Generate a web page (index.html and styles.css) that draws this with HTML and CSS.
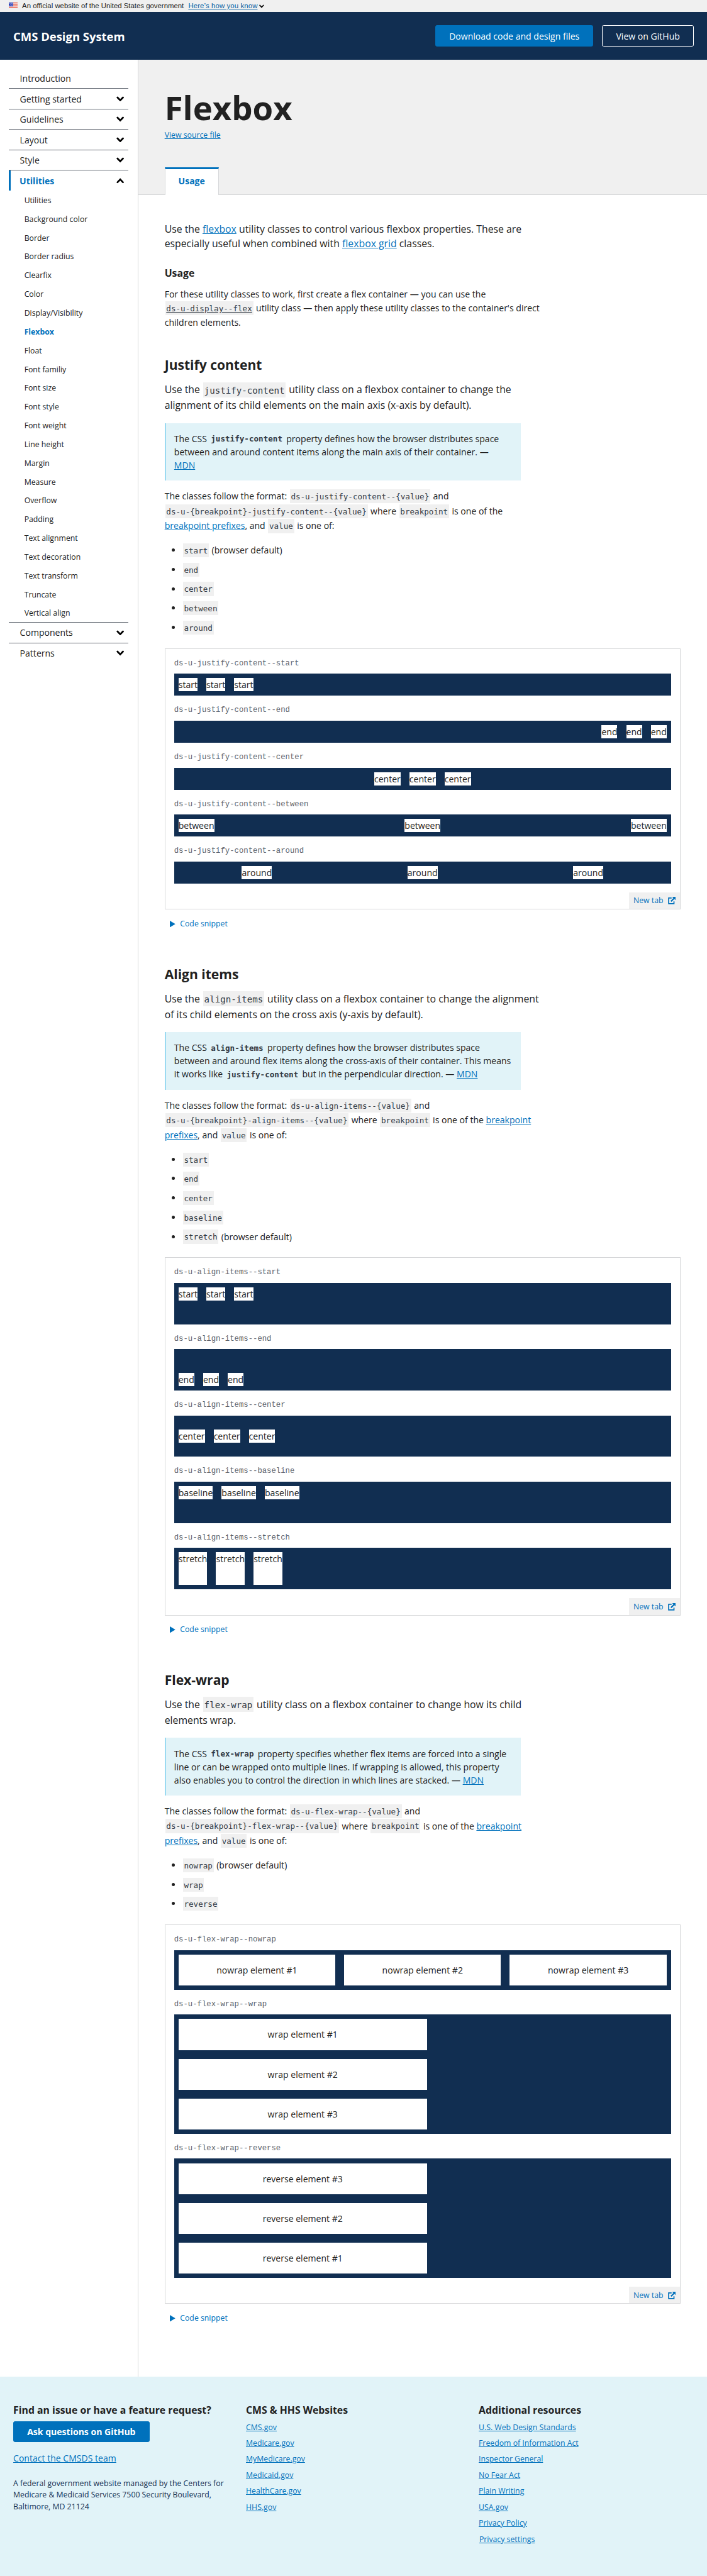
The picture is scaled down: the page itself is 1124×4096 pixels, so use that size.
FILE: index.html
```html
<!DOCTYPE html>
<html lang="en">
<head>
<meta charset="utf-8">
<title>Flexbox - CMS Design System</title>
<link rel="stylesheet" href="styles.css">
</head>
<body>
<svg class="sprite" width="0" height="0" aria-hidden="true">
  <symbol id="chevron" viewBox="0 0 14 10"><path d="M2 2.2 7 7.4 12 2.2" fill="none" stroke="#000" stroke-width="3.1" stroke-linecap="round" stroke-linejoin="miter"/></symbol>
  <symbol id="external" viewBox="0 0 15 15"><path d="M7 2.4H1.3V13.4H11.6V9" fill="none" stroke="#0071bc" stroke-width="2.1"/><path d="M8 0h6.6v6.4l-2.2-2.1-5.6 5.6-2-2 5.6-5.6z" fill="#0071bc"/></symbol>
</svg>

<div class="banner">
  <svg class="flag" viewBox="0 0 16 11">
    <rect width="16" height="11" fill="#fff"/>
    <path d="M0 .5h16M0 2.5h16M0 4.5h16M0 6.5h16M0 8.5h16M0 10.5h16" stroke="#e0341c" stroke-width="1"/>
    <rect width="8" height="7" fill="#1e33b1"/>
    <path d="M1 1.5h7M2 3.5h6M1 5.5h7" stroke="#fff" stroke-width="1" stroke-dasharray="1 1"/>
  </svg>
  <span class="banner-text">An official website of the United States government</span>
  <a class="banner-link" href="#">Here’s how you know</a>
  <svg class="banner-chevron"><use href="#chevron"/></svg>
</div>

<header class="header">
  <a class="brand" href="#">CMS Design System</a>
  <div class="header-actions">
    <a class="button button-primary" href="#">Download code and design files</a>
    <a class="button button-outline" href="#">View on GitHub</a>
  </div>
</header>

<div class="layout">
  <nav class="sidebar">
    <a class="nav-item" href="#">Introduction</a>
    <a class="nav-item" href="#">Getting started<svg class="chevron"><use href="#chevron"/></svg></a>
    <a class="nav-item" href="#">Guidelines<svg class="chevron"><use href="#chevron"/></svg></a>
    <a class="nav-item" href="#">Layout<svg class="chevron"><use href="#chevron"/></svg></a>
    <a class="nav-item" href="#">Style<svg class="chevron"><use href="#chevron"/></svg></a>
    <a class="nav-item nav-open" href="#">Utilities<svg class="chevron"><use href="#chevron"/></svg></a>
    <div class="subnav">
      <a href="#">Utilities</a>
      <a href="#">Background color</a>
      <a href="#">Border</a>
      <a href="#">Border radius</a>
      <a href="#">Clearfix</a>
      <a href="#">Color</a>
      <a href="#">Display/Visibility</a>
      <a class="current" href="#">Flexbox</a>
      <a href="#">Float</a>
      <a href="#">Font familiy</a>
      <a href="#">Font size</a>
      <a href="#">Font style</a>
      <a href="#">Font weight</a>
      <a href="#">Line height</a>
      <a href="#">Margin</a>
      <a href="#">Measure</a>
      <a href="#">Overflow</a>
      <a href="#">Padding</a>
      <a href="#">Text alignment</a>
      <a href="#">Text decoration</a>
      <a href="#">Text transform</a>
      <a href="#">Truncate</a>
      <a href="#">Vertical align</a>
    </div>
    <a class="nav-item nav-first-after" href="#">Components<svg class="chevron"><use href="#chevron"/></svg></a>
    <a class="nav-item nav-last" href="#">Patterns<svg class="chevron"><use href="#chevron"/></svg></a>
  </nav>

  <main class="main">
    <div class="page-header">
      <h1>Flexbox</h1>
      <a class="source" href="#">View source file</a>
      <div class="tab">Usage</div>
    </div>

    <div class="content">
      <p class="intro">Use the <a href="#">flexbox</a> utility classes to control various flexbox properties. These are<br>especially useful when combined with <a href="#">flexbox grid</a> classes.</p>
      <h3>Usage</h3>
      <p class="usage">For these utility classes to work, first create a flex container — you can use the<br><a class="code-link" href="#"><code>ds-u-display--flex</code></a> utility class — then apply these utility classes to the container's direct<br>children elements.</p>

      <section>
        <h2>Justify content</h2>
        <p class="lead">Use the <code>justify-content</code> utility class on a flexbox container to change the<br>alignment of its child elements on the main axis (x-axis by default).</p>
        <div class="callout">The CSS <code>justify-content</code> property defines how the browser distributes space<br>between and around content items along the main axis of their container. —<br><a href="#">MDN</a></div>
        <p class="format">The classes follow the format: <code>ds-u-justify-content--{value}</code> and<br><code>ds-u-{breakpoint}-justify-content--{value}</code> where <code>breakpoint</code> is one of the<br><a href="#">breakpoint prefixes</a>, and <code>value</code> is one of:</p>
        <ul>
          <li><code>start</code> (browser default)</li>
          <li><code>end</code></li>
          <li><code>center</code></li>
          <li><code>between</code></li>
          <li><code>around</code></li>
        </ul>
        <div class="example">
          <div class="label">ds-u-justify-content--start</div>
          <div class="bar justify-start"><div>start</div><div>start</div><div>start</div></div>
          <div class="label">ds-u-justify-content--end</div>
          <div class="bar justify-end"><div>end</div><div>end</div><div>end</div></div>
          <div class="label">ds-u-justify-content--center</div>
          <div class="bar justify-center"><div>center</div><div>center</div><div>center</div></div>
          <div class="label">ds-u-justify-content--between</div>
          <div class="bar justify-between"><div>between</div><div>between</div><div>between</div></div>
          <div class="label">ds-u-justify-content--around</div>
          <div class="bar justify-around"><div>around</div><div>around</div><div>around</div></div>
          <a class="new-tab" href="#">New tab<svg class="external"><use href="#external"/></svg></a>
        </div>
        <a class="snippet" href="#"><svg class="triangle" viewBox="0 0 10 12"><path d="M0 0 10 6 0 12z" fill="#0071bc"/></svg>Code snippet</a>
      </section>

      <section>
        <h2>Align items</h2>
        <p class="lead">Use the <code>align-items</code> utility class on a flexbox container to change the alignment<br>of its child elements on the cross axis (y-axis by default).</p>
        <div class="callout">The CSS <code>align-items</code> property defines how the browser distributes space<br>between and around flex items along the cross-axis of their container. This means<br>it works like <code>justify-content</code> but in the perpendicular direction. — <a href="#">MDN</a></div>
        <p class="format">The classes follow the format: <code>ds-u-align-items--{value}</code> and<br><code>ds-u-{breakpoint}-align-items--{value}</code> where <code>breakpoint</code> is one of the <a href="#">breakpoint<br>prefixes</a>, and <code>value</code> is one of:</p>
        <ul>
          <li><code>start</code></li>
          <li><code>end</code></li>
          <li><code>center</code></li>
          <li><code>baseline</code></li>
          <li><code>stretch</code> (browser default)</li>
        </ul>
        <div class="example">
          <div class="label">ds-u-align-items--start</div>
          <div class="bar tall items-start"><div>start</div><div>start</div><div>start</div></div>
          <div class="label">ds-u-align-items--end</div>
          <div class="bar tall items-end"><div>end</div><div>end</div><div>end</div></div>
          <div class="label">ds-u-align-items--center</div>
          <div class="bar tall items-center"><div>center</div><div>center</div><div>center</div></div>
          <div class="label">ds-u-align-items--baseline</div>
          <div class="bar tall items-baseline"><div>baseline</div><div>baseline</div><div>baseline</div></div>
          <div class="label">ds-u-align-items--stretch</div>
          <div class="bar tall"><div>stretch</div><div>stretch</div><div>stretch</div></div>
          <a class="new-tab" href="#">New tab<svg class="external"><use href="#external"/></svg></a>
        </div>
        <a class="snippet" href="#"><svg class="triangle" viewBox="0 0 10 12"><path d="M0 0 10 6 0 12z" fill="#0071bc"/></svg>Code snippet</a>
      </section>

      <section>
        <h2>Flex-wrap</h2>
        <p class="lead">Use the <code>flex-wrap</code> utility class on a flexbox container to change how its child<br>elements wrap.</p>
        <div class="callout">The CSS <code>flex-wrap</code> property specifies whether flex items are forced into a single<br>line or can be wrapped onto multiple lines. If wrapping is allowed, this property<br>also enables you to control the direction in which lines are stacked. — <a href="#">MDN</a></div>
        <p class="format">The classes follow the format: <code>ds-u-flex-wrap--{value}</code> and<br><code>ds-u-{breakpoint}-flex-wrap--{value}</code> where <code>breakpoint</code> is one of the <a href="#">breakpoint<br>prefixes</a>, and <code>value</code> is one of:</p>
        <ul>
          <li><code>nowrap</code> (browser default)</li>
          <li><code>wrap</code></li>
          <li><code>reverse</code></li>
        </ul>
        <div class="example">
          <div class="label">ds-u-flex-wrap--nowrap</div>
          <div class="bar boxes"><div>nowrap element #1</div><div>nowrap element #2</div><div>nowrap element #3</div></div>
          <div class="label">ds-u-flex-wrap--wrap</div>
          <div class="bar boxes wrap"><div>wrap element #1</div><div>wrap element #2</div><div>wrap element #3</div></div>
          <div class="label">ds-u-flex-wrap--reverse</div>
          <div class="bar boxes wrap wrap-reverse"><div>reverse element #1</div><div>reverse element #2</div><div>reverse element #3</div></div>
          <a class="new-tab" href="#">New tab<svg class="external"><use href="#external"/></svg></a>
        </div>
        <a class="snippet" href="#"><svg class="triangle" viewBox="0 0 10 12"><path d="M0 0 10 6 0 12z" fill="#0071bc"/></svg>Code snippet</a>
      </section>
    </div>
  </main>
</div>

<footer class="footer">
  <div class="footer-col">
    <h4>Find an issue or have a feature request?</h4>
    <a class="button button-primary button-bold" href="#">Ask questions on GitHub</a>
    <a class="contact" href="#">Contact the CMSDS team</a>
    <p class="address">A federal government website managed by the Centers for<br>Medicare &amp; Medicaid Services 7500 Security Boulevard,<br>Baltimore, MD 21124</p>
  </div>
  <div class="footer-col">
    <h4>CMS &amp; HHS Websites</h4>
    <div class="links">
      <a href="#">CMS.gov</a>
      <a href="#">Medicare.gov</a>
      <a href="#">MyMedicare.gov</a>
      <a href="#">Medicaid.gov</a>
      <a href="#">HealthCare.gov</a>
      <a href="#">HHS.gov</a>
    </div>
  </div>
  <div class="footer-col">
    <h4>Additional resources</h4>
    <div class="links">
      <a href="#">U.S. Web Design Standards</a>
      <a href="#">Freedom of Information Act</a>
      <a href="#">Inspector General</a>
      <a href="#">No Fear Act</a>
      <a href="#">Plain Writing</a>
      <a href="#">USA.gov</a>
      <a href="#">Privacy Policy</a>
      <a class="settings" href="#">Privacy settings</a>
    </div>
  </div>
</footer>
</body>
</html>
```
FILE: styles.css
```css
* { box-sizing: border-box; }

/* All sizes are in rem; the root size sets the scale of the page. */
html { background: #fff; font-size: 8.78125px; }

body {
  margin: 0;
  color: #212121;
  font: 1.6rem/2.4rem "Open Sans", sans-serif;
}

a { color: #0071bc; }
h1, h2, h3, h4, p, ul { margin: 0; padding: 0; }
.sprite { display: block; }

/* Government banner */
.banner {
  display: flex;
  height: 2.2rem;
  padding-left: 1.6rem;
  background: #f0f0f0;
  font: 1.296rem/2.1rem "Liberation Sans", Arial, sans-serif;
  white-space: nowrap;
}
.flag { width: 1.6rem; height: 1.1rem; margin: 0.4rem 0.8rem 0 0; }
.banner-text { width: 30.1rem; }
.banner-link { width: 12.6rem; color: #005ea2; letter-spacing: 0.013rem; }
.banner-chevron { width: 0.9rem; height: 0.7rem; margin: 0.8rem 0 0 0.2rem; }

/* Site header */
.header {
  display: flex;
  align-items: center;
  justify-content: space-between;
  height: 8.6rem;
  padding: 0 2.4rem;
  background: #112e51;
}
.brand { color: #fff; font-size: 2.1rem; font-weight: 700; text-decoration: none; }
.header-actions { display: flex; gap: 1.6rem; }
.button {
  display: flex;
  align-items: center;
  justify-content: center;
  height: 3.8rem;
  padding: 0 2.4rem;
  border: 1px solid #0071bc;
  border-radius: 0.3rem;
  color: #fff;
  text-decoration: none;
  white-space: nowrap;
}
.button-primary { background: #0071bc; }
.button-outline { border-color: #fff; }
.button-bold { font-weight: 700; }

/* Columns */
.layout { display: flex; height: 419.6rem; }
.sidebar {
  width: 25rem;
  flex: none;
  padding: 1.6rem 1.6rem 0;
  border-right: 1px solid #d6d7d9;
}
.nav-item {
  display: flex;
  align-items: center;
  justify-content: space-between;
  height: 3.7rem;
  padding: 0 0.8rem 0 2rem;
  border-bottom: 1px solid #5b616b;
  color: #212121;
  text-decoration: none;
}
.chevron { width: 1.4rem; height: 1rem; }
.nav-open {
  height: 3.6rem;
  padding-left: 1.6rem;
  border-bottom: 0;
  border-left: 0.4rem solid #0071bc;
  color: #0071bc;
  font-weight: 700;
}
.nav-open .chevron { transform: scaleY(-1); }
.nav-first-after { height: 3.8rem; border-top: 1px solid #5b616b; }
.nav-last { height: 3.6rem; border-bottom: 0; }
.subnav { display: flex; flex-direction: column; }
.subnav a {
  height: 3.4rem;
  padding-left: 2.8rem;
  color: #212121;
  font-size: 1.4rem;
  line-height: 3.55rem;
  text-decoration: none;
}
.subnav .current { color: #0071bc; font-weight: 700; }

.main { flex: 1; min-width: 0; white-space: nowrap; }

/* Page header */
.page-header {
  display: flex;
  flex-direction: column;
  align-items: flex-start;
  height: 24.5rem;
  padding: 4.8rem 4.8rem 0;
  border-bottom: 1px solid #d6d7d9;
  background: #f0f0f0;
}
h1 { font-size: 6rem; line-height: 7.8rem; }
.source { font-size: 1.4rem; line-height: 2.2rem; }
.tab {
  flex: none;
  width: 9.8rem;
  height: 5rem;
  margin-top: 4.7rem;
  border: 1px solid #d6d7d9;
  border-top: 0.4rem solid #0071bc;
  border-bottom: 0;
  background: #fff;
  color: #0071bc;
  font-weight: 700;
  line-height: 4.4rem;
  text-align: center;
}

/* Content */
.content { padding: 4.85rem 4.8rem 0; }
.intro { font-size: 1.8rem; line-height: 2.7rem; }
h3 { margin-top: 2.7rem; font-size: 1.8rem; line-height: 2.3rem; }
.usage { margin-top: 1.5rem; line-height: 2.55rem; }
section { margin-top: 6.4rem; }
.usage + section { margin-top: 4.75rem; }
h2 { font-size: 2.4rem; line-height: 3.1rem; }
.lead { margin-top: 1.6rem; font-size: 1.8rem; line-height: 2.88rem; }

code {
  margin: 0 0.1rem;
  padding: 0.33em 0.2rem 0.24em;
  background: #f0f0f0;
  color: #323a45;
  font-family: "DejaVu Sans Mono", monospace;
  font-size: 0.897em;
  line-height: 1;
}
.code-link { color: #323a45; }

.callout {
  width: 64.5rem;
  height: 10.4rem;
  margin-top: 1.69rem;
  padding: 1.6rem 1.6rem 1.6rem 1.5rem;
  border-left: 0.3rem solid #9bdaf1;
  background: #e1f3f8;
}
.callout code { background: none; font-weight: 700; }
.format { margin-top: 1.5rem; line-height: 2.7rem; }

ul { margin-top: 1.7rem; padding-left: 3.2rem; }
li { height: 2.7rem; line-height: 2.7rem; }
li + li { margin-top: 0.8rem; }

/* Examples */
.example {
  display: flex;
  flex-direction: column;
  width: 93.4rem;
  margin-top: 2.4rem;
  padding: 1.6rem 1.6rem 0;
  border: 1px solid #d6d7d9;
}
.label {
  margin-bottom: 0.7rem;
  color: #5b616b;
  font: 1.4rem/2.2rem "Liberation Mono", "Courier New", monospace;
}
.bar {
  display: flex;
  height: 4rem;
  margin-bottom: 1.6rem;
  background: #112e51;
}
.bar > div { margin: 0.8rem; background: #fff; }
.tall { height: 7.5rem; }
.justify-end { justify-content: flex-end; }
.justify-center { justify-content: center; }
.justify-between { justify-content: space-between; }
.justify-around { justify-content: space-around; }
.items-start { align-items: flex-start; }
.items-end { align-items: flex-end; }
.items-center { align-items: center; }
.items-baseline { align-items: baseline; }
.boxes { height: auto; }
.boxes > div { width: 50%; padding: 1.6rem; text-align: center; }
.wrap { flex-wrap: wrap; }
.wrap > div { margin-right: 30rem; }
.wrap-reverse { flex-wrap: wrap-reverse; }

.new-tab {
  display: flex;
  align-items: center;
  align-self: flex-end;
  gap: 0.8rem;
  height: 3rem;
  margin-right: -1.6rem;
  padding: 0.1rem 0.8rem 0;
  background: #f0f0f0;
  font-size: 1.4rem;
  line-height: 2.1rem;
  text-decoration: none;
}
.external { width: 1.4rem; height: 1.4rem; }
.snippet {
  display: flex;
  align-items: center;
  gap: 0.8rem;
  height: 2.1rem;
  margin-top: 1.55rem;
  padding-left: 1rem;
  font-size: 1.4rem;
  line-height: 2.1rem;
  text-decoration: none;
}
.triangle { width: 1rem; height: 1.2rem; }

/* Footer */
.footer {
  display: flex;
  height: 36rem;
  padding: 4.8rem 0.8rem 0;
  background: #e1f3f8;
  white-space: nowrap;
}
.footer-col {
  display: flex;
  flex: 1;
  flex-direction: column;
  align-items: flex-start;
  padding: 0 1.6rem;
}
h4 { font-size: 1.8rem; line-height: 2.3rem; }
.footer .button { margin-top: 0.9rem; }
.contact { margin-top: 1.65rem; }
.address {
  margin-top: 2.4rem;
  color: #112e51;
  font-size: 1.4rem;
  line-height: 2.1rem;
}
.links {
  display: flex;
  flex-direction: column;
  align-items: flex-start;
  gap: 0.8rem;
  margin-top: 1rem;
  font-size: 1.4rem;
  line-height: 2.1rem;
}
.settings { margin-left: 0.1rem; }
```
